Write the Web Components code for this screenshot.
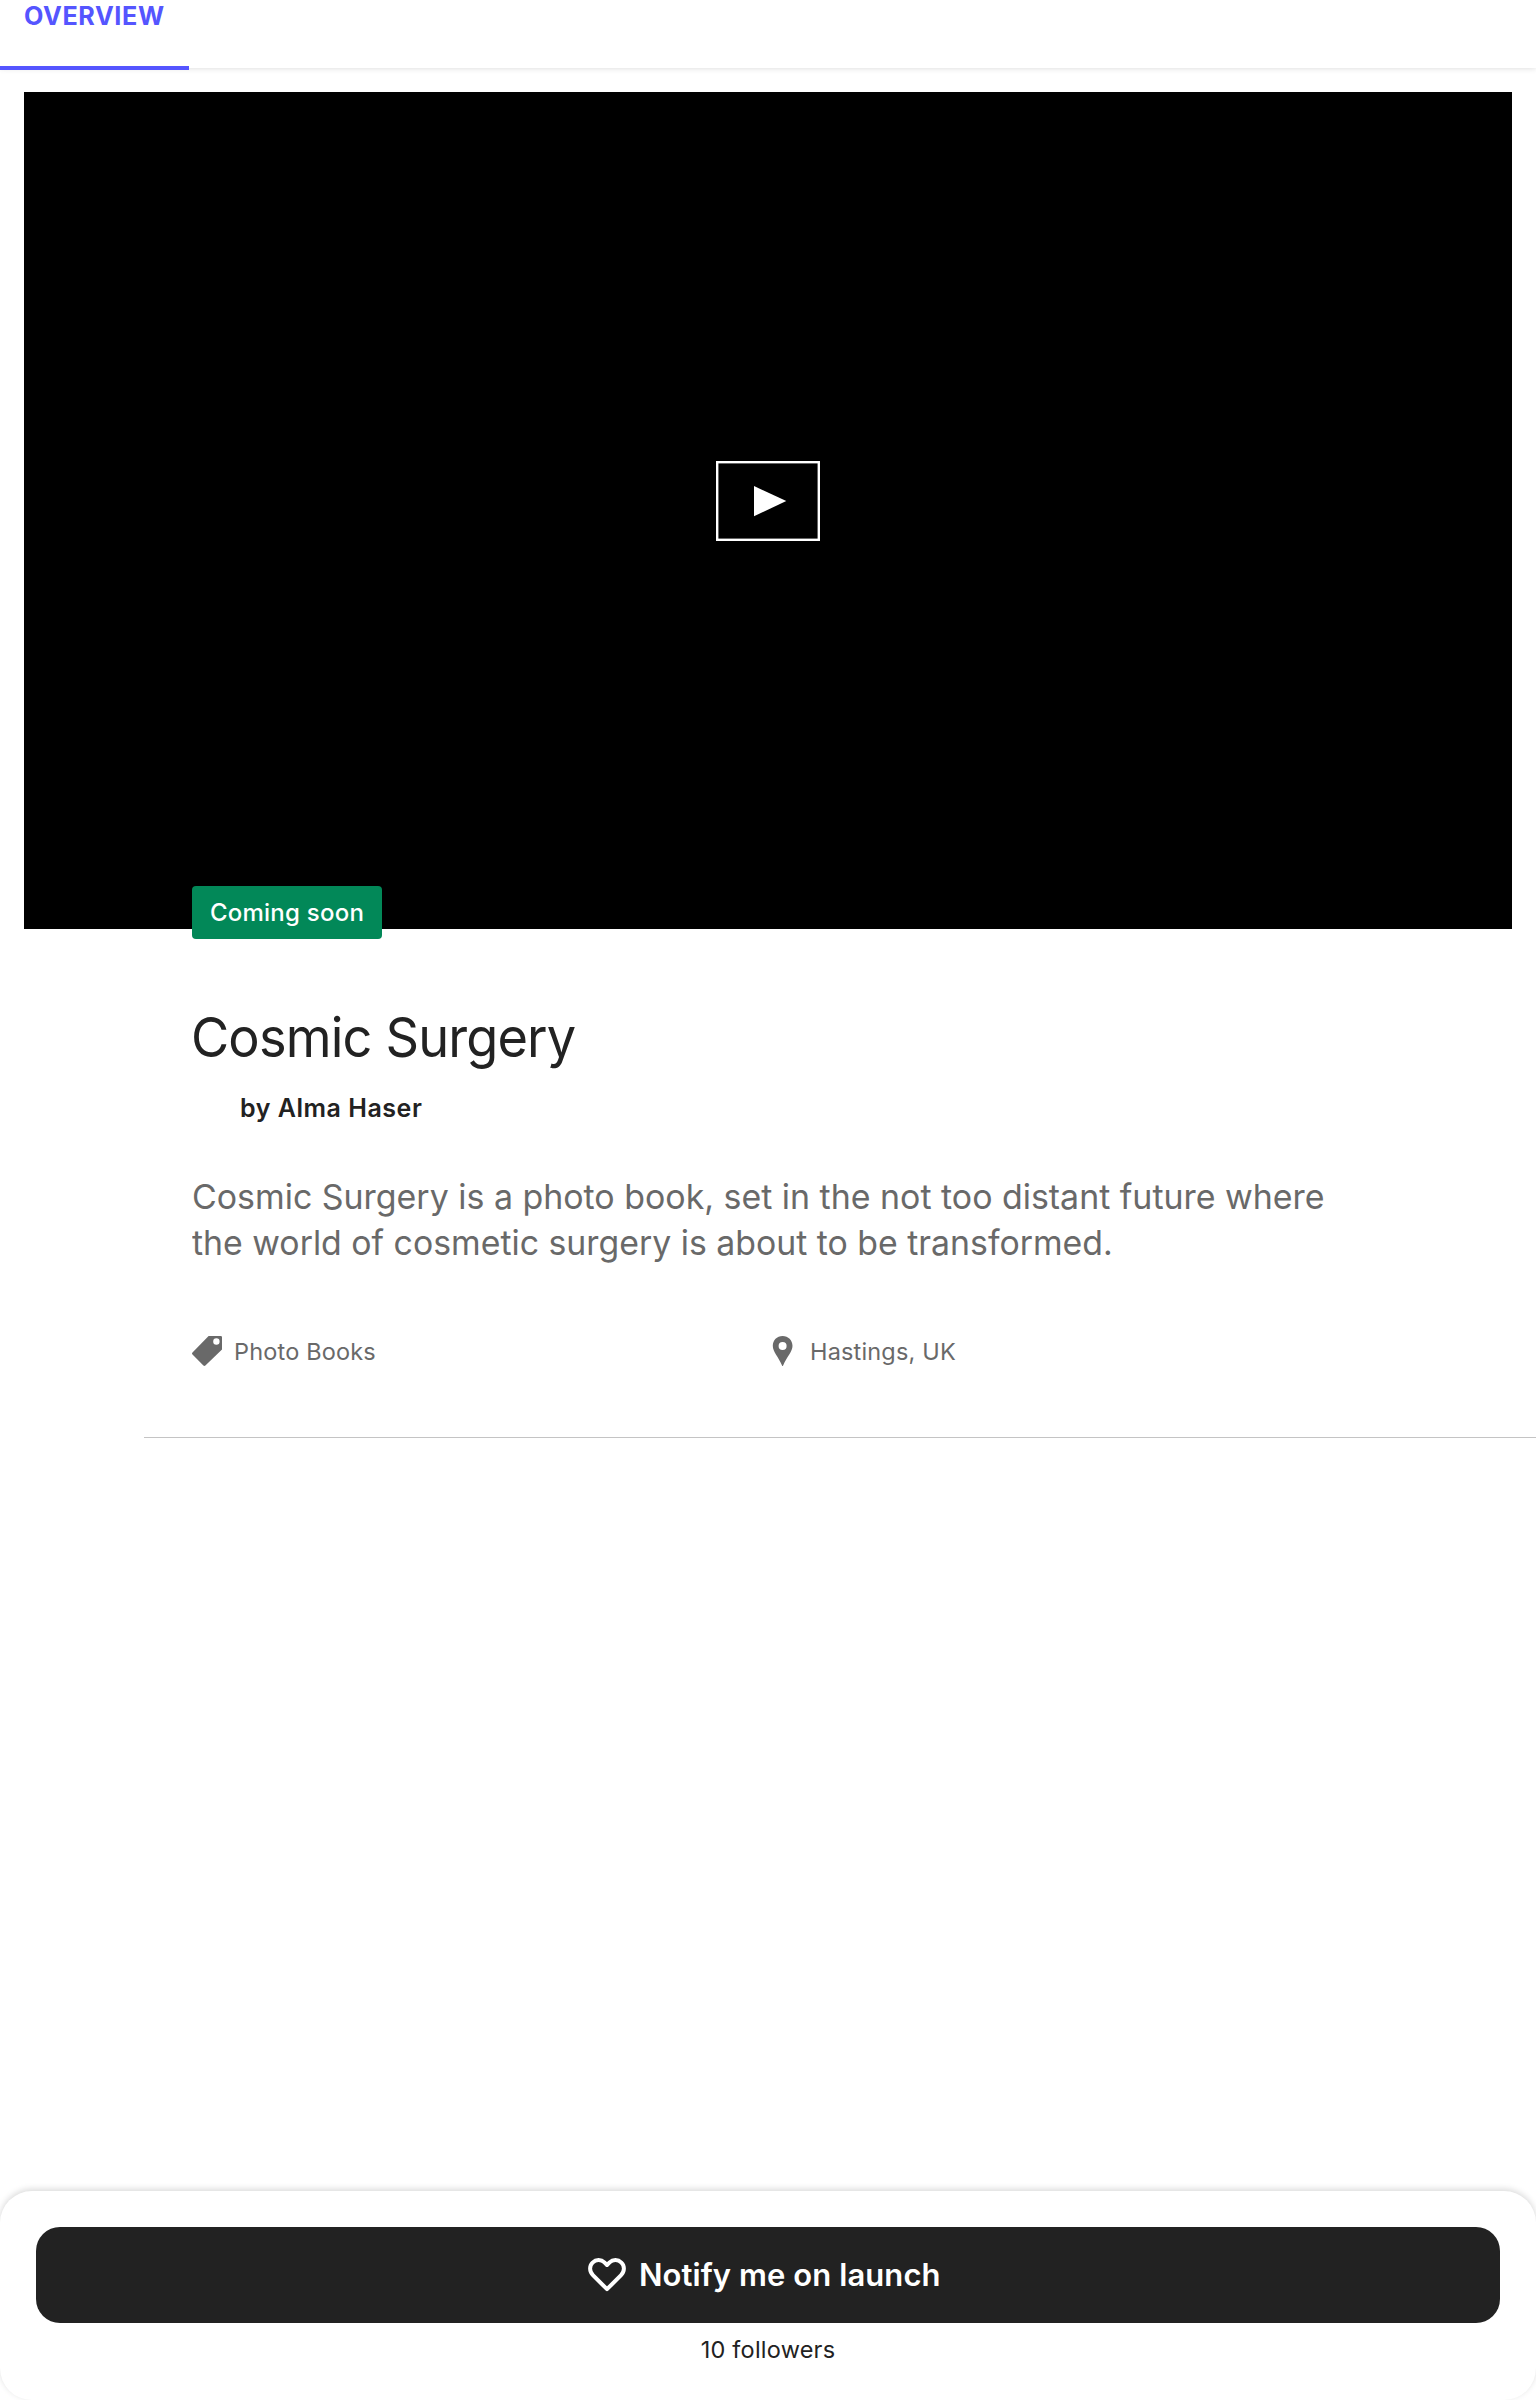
<!DOCTYPE html>
<html lang="en">
<head>
<meta charset="utf-8">
<title>Cosmic Surgery</title>
<style>
html,body{margin:0;background:#fff}
body{font-family:Inter,"Liberation Sans",sans-serif;color:#222;height:2400px;overflow:hidden}
</style>
</head>
<body>
<project-page></project-page>
<script>
const define=(name,html)=>customElements.define(name,class extends HTMLElement{
  constructor(){super();this.attachShadow({mode:'open'}).innerHTML=html}
});

define('tab-bar',`<style>
:host{display:flex;height:68px;box-shadow:0 0 6px rgba(0,0,0,.16);position:relative;z-index:1;background:#fff}
a{box-sizing:border-box;width:189px;height:70px;padding-left:24px;border-bottom:4px solid #5555ff;color:#5555ff;font-weight:700;font-size:25.2px;line-height:32px;letter-spacing:.6px;white-space:nowrap}
</style><a><slot></slot></a>`);

define('video-player',`<style>
:host{display:flex;box-sizing:border-box;height:837px;margin:24px 24px 0;padding-bottom:19px;background:#000;align-items:center;justify-content:center}
svg{display:block}
</style><svg width="104" height="80" viewBox="0 0 104 80"><rect x="1.2" y="1.2" width="101.6" height="77.6" fill="none" stroke="#fff" stroke-width="2.4"/><path d="M38 25L70.3 40 38 55.3z" fill="#fff"/></svg>`);

define('status-badge',`<style>
:host{display:flex;box-sizing:border-box;width:190px;height:53px;justify-content:center;border-radius:4px;background:#028858;color:#fff;font-weight:500;font-size:24px;line-height:53px;letter-spacing:.24px;white-space:nowrap}
</style><slot></slot>`);

define('meta-item',`<style>
:host{display:flex;flex:0 0 576px;gap:12px;height:30px;line-height:32px;font-size:23.5px;letter-spacing:.17px;color:#696969;white-space:nowrap}
::slotted(svg){display:block;width:30px;height:30px;fill:#696969}
</style><slot name="icon"></slot><slot></slot>`);

define('project-summary',`<style>
:host{display:block;padding-left:144px}
section{display:flex;flex-direction:column;padding:0 48px 71px;border-bottom:1px solid #c4c4c4}
status-badge{margin-top:-43px}
h1{margin:66px 0 0 -1px;font-weight:400;font-size:54.4px;line-height:64px;letter-spacing:-.88px;white-space:nowrap;transform:scaleX(.962);transform-origin:0 0}
.by{margin:21px 0 0 48px;font-weight:600;font-size:25px;line-height:36px;letter-spacing:.53px}
.blurb{margin:47px 0 0;font-size:34.6px;line-height:46px;color:#696969;white-space:nowrap}
.blurb span{display:block;transform:scaleX(.9805);transform-origin:0 0}
.blurb span+span{transform:scaleX(.978)}
.meta{display:flex;margin-top:71px}
</style><section>
<status-badge>Coming soon</status-badge>
<h1>Cosmic Surgery</h1>
<div class="by">by Alma Haser</div>
<p class="blurb"><span>Cosmic Surgery is a photo book, set in the not too distant future where</span><span>the world of cosmetic surgery is about to be transformed.</span></p>
<div class="meta">
<meta-item><svg slot="icon" viewBox="0 0 30 30"><path fill-rule="evenodd" d="M16.6 0H28.8Q30 0 30 1.2V13.5L13.4 29.5Q12.4 30.4 11.4 29.5L.5 18.4Q-.5 17.4.5 16.4ZM24.4 2.3a3.2 3.2 0 1 0 0 6.4 3.2 3.2 0 0 0 0-6.4Z"/></svg>Photo Books</meta-item>
<meta-item><svg slot="icon" viewBox="0 0 30 30"><path fill-rule="evenodd" d="M14.6 0C8.9 0 4.8 4.3 4.8 9.8 4.8 15.7 10 20.2 14.3 30H14.9C19.2 20.2 24.5 15.7 24.5 9.8 24.5 4.3 20.3 0 14.6 0ZM14.6 6a4 4 0 1 1 0 8 4 4 0 0 1 0-8Z"/></svg>Hastings, UK</meta-item>
</div>
</section>`);

define('notify-button',`<style>
:host{display:flex;height:96px;border-radius:24px;background:#222;color:#fff;align-items:center;justify-content:center;font-weight:600;font-size:31px;letter-spacing:.08px;line-height:40px;white-space:nowrap}
svg{display:block;width:40px;height:36px;margin-right:12px}
span{margin-right:8.5px}
</style><svg viewBox="0 0 40 36"><path d="M20 32.2L5.9 18.1C2.3 14.5 2.2 8.9 5.6 5.6 9 2.3 14.1 2.3 17.4 5.4L20 8 22.6 5.4C25.9 2.3 31 2.3 34.4 5.6 37.8 8.9 37.7 14.5 34.1 18.1Z" fill="none" stroke="#fff" stroke-width="4" stroke-linejoin="round"/></svg><span><slot></slot></span>`);

define('action-panel',`<style>
:host{display:block;box-sizing:border-box;height:209px;padding:36px 36px 0;border-radius:32px;background:#fff;box-shadow:0 -2px 6px rgba(0,0,0,.15)}
p{margin:11px 0 0;text-align:center;font-size:23.5px;line-height:32px;letter-spacing:.23px}
</style><notify-button>Notify me on launch</notify-button><p>10 followers</p>`);

define('project-page',`<style>
:host{display:flex;flex-direction:column;height:2400px;overflow:hidden}
main{flex:1}
</style><tab-bar>OVERVIEW</tab-bar><main><video-player></video-player><project-summary></project-summary></main><action-panel></action-panel>`);
</script>
</body>
</html>
